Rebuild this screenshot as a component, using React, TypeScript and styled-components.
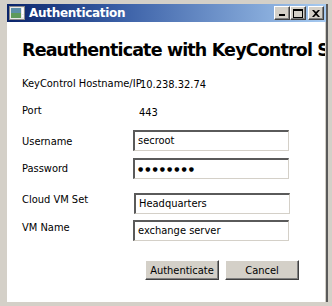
import React from "react";
import styled, { createGlobalStyle } from "styled-components";

const Global = createGlobalStyle`
  html, body { margin: 0; padding: 0; background: #d4d0c8; }
  * { box-sizing: border-box; }
`;

const Window = styled.div`
  width: 332px;
  height: 306px;
  background: #d4d0c8;
  padding: 4px 3px 4px 7px;
  display: flex;
  flex-direction: column;
  border-right: 1px solid #d4d0c8;
`;

const Inner = styled.div`
  flex: 1;
  display: flex;
  flex-direction: column;
  border-right: 2px solid #5a5a5a;
  min-height: 0;
`;

const TitleBar = styled.div`
  height: 18px;
  background: linear-gradient(to right, #0a246a 0%, #3a5fa6 35%, #a6caf0 100%);
  display: flex;
  align-items: center;
  padding: 0 2px 0 2px;
  flex-shrink: 0;
`;

const TitleText = styled.span`
  color: #fff;
  font-family: "DejaVu Sans", Verdana, sans-serif;
  font-weight: bold;
  font-size: 12px;
  margin-left: 4px;
  flex: 1;
  letter-spacing: -0.3px;
`;

const CaptionButtons = styled.div`
  display: flex;
  align-items: center;
`;

const CaptionButton = styled.div<{ $gap?: number }>`
  width: 16px;
  height: 14px;
  background: #d4d0c8;
  border-top: 1px solid #fff;
  border-left: 1px solid #fff;
  border-right: 1px solid #404040;
  border-bottom: 1px solid #404040;
  box-shadow: inset -1px -1px 0 #808080;
  margin-left: ${(p) => p.$gap ?? 0}px;
  display: flex;
  align-items: center;
  justify-content: center;
`;

const Content = styled.div`
  flex: 1;
  background: #fff;
  padding: 17px 0 0 15px;
  overflow: hidden;
  display: flex;
  flex-direction: column;
  border-right: 1px solid #d4d0c8;
`;

const Heading = styled.h1`
  margin: 0;
  font-family: "DejaVu Sans", Verdana, sans-serif;
  font-weight: bold;
  font-size: 17.5px;
  line-height: 22px;
  white-space: nowrap;
  color: #000;
  letter-spacing: -0.85px;
`;

const Form = styled.div`
  margin-top: 15px;
  display: flex;
  flex-direction: column;
`;

const Row = styled.div<{ $h: number }>`
  height: ${(p) => p.$h}px;
  display: flex;
  align-items: flex-start;
`;

const Label = styled.div<{ $top: number; $w?: number }>`
  width: ${(p) => p.$w ?? 111}px;
  flex-shrink: 0;
  padding-top: ${(p) => p.$top}px;
  font-family: "DejaVu Sans Condensed", "DejaVu Sans", sans-serif;
  font-size: 11px;
  line-height: 13px;
  color: #000;
  white-space: nowrap;
`;

const Value = styled.div<{ $top: number; $left: number }>`
  padding-top: ${(p) => p.$top}px;
  padding-left: ${(p) => p.$left}px;
  font-family: "DejaVu Sans Condensed", "DejaVu Sans", sans-serif;
  font-size: 11px;
  line-height: 13px;
  color: #000;
  white-space: nowrap;
`;

const Field = styled.div<{ $top: number; $left?: number }>`
  margin-top: ${(p) => p.$top}px;
  margin-left: ${(p) => p.$left ?? 0}px;
  width: 156px;
  height: 21px;
  border-top: 2px solid #5a5a5a;
  border-left: 2px solid #5a5a5a;
  border-right: 1px solid #d4d0c8;
  border-bottom: 1px solid #d4d0c8;
  padding: 2px 0 0 3px;
  font-family: "DejaVu Sans Condensed", "DejaVu Sans", sans-serif;
  font-size: 11px;
  line-height: 14px;
  color: #000;
  white-space: nowrap;
`;

const Dots = styled.span`
  font-family: "DejaVu Sans", sans-serif;
  font-size: 6px;
  letter-spacing: 2px;
  vertical-align: 1px;
`;

const Buttons = styled.div`
  display: flex;
  gap: 6px;
  margin-left: 123px;
  margin-top: 18px;
`;

const Button = styled.button<{ $w: number }>`
  width: ${(p) => p.$w}px;
  height: 20px;
  padding: 0;
  background: #d4d0c8;
  border-top: 1px solid #fff;
  border-left: 1px solid #fff;
  border-right: 1px solid #404040;
  border-bottom: 1px solid #404040;
  box-shadow: inset -1px -1px 0 #808080;
  font-family: "DejaVu Sans Condensed", "DejaVu Sans", sans-serif;
  font-size: 11px;
  color: #000;
`;

const AppIcon = () => (
  <svg width="16" height="14" viewBox="0 0 16 14">
    <rect x="0.5" y="0.5" width="15" height="13" fill="#e8e8e8" stroke="#8a8a8a" />
    <rect x="2" y="2" width="10" height="10" fill="#5d8fa8" />
    <rect x="2" y="7" width="10" height="5" fill="#5f9a5a" />
    <rect x="13" y="2" width="1.5" height="6" fill="#ffffff" />
    <rect x="13" y="9" width="1.5" height="2" fill="#ffffff" />
  </svg>
);

export default function App() {
  return (
    <>
      <Global />
      <Window>
        <Inner>
          <TitleBar>
            <AppIcon />
            <TitleText>Authentication</TitleText>
            <CaptionButtons>
              <CaptionButton>
                <svg width="8" height="8" viewBox="0 0 8 8">
                  <rect x="1" y="5" width="6" height="2" fill="#000" />
                </svg>
              </CaptionButton>
              <CaptionButton>
                <svg width="10" height="9" viewBox="0 0 10 9">
                  <rect x="0.5" y="0.5" width="9" height="8" fill="none" stroke="#000" />
                  <rect x="0" y="0" width="10" height="2" fill="#000" />
                </svg>
              </CaptionButton>
              <CaptionButton $gap={2}>
                <svg width="8" height="7" viewBox="0 0 8 7">
                  <path d="M0 0 L2 0 L4 2 L6 0 L8 0 L5 3.5 L8 7 L6 7 L4 5 L2 7 L0 7 L3 3.5 Z" fill="#000" />
                </svg>
              </CaptionButton>
            </CaptionButtons>
          </TitleBar>
          <Content>
            <Heading>Reauthenticate with KeyControl Server</Heading>
            <Form>
              <Row $h={27}>
                <Label $top={1} $w={118}>KeyControl Hostname/IP</Label>
                <Value $top={2} $left={0}>10.238.32.74</Value>
              </Row>
              <Row $h={27}>
                <Label $top={1}>Port</Label>
                <Value $top={3} $left={6}>443</Value>
              </Row>
              <Row $h={28}>
                <Label $top={5}>Username</Label>
                <Field $top={0}>secroot</Field>
              </Row>
              <Row $h={35}>
                <Label $top={4}>Password</Label>
                <Field $top={0}><Dots>●●●●●●●●</Dots></Field>
              </Row>
              <Row $h={27}>
                <Label $top={-3}>Cloud VM Set</Label>
                <Field $top={0} $left={1}>Headquarters</Field>
              </Row>
              <Row $h={22}>
                <Label $top={1}>VM Name</Label>
                <Field $top={0}>exchange server</Field>
              </Row>
            </Form>
            <Buttons>
              <Button $w={74}>Authenticate</Button>
              <Button $w={74}>Cancel</Button>
            </Buttons>
          </Content>
        </Inner>
      </Window>
    </>
  );
}
